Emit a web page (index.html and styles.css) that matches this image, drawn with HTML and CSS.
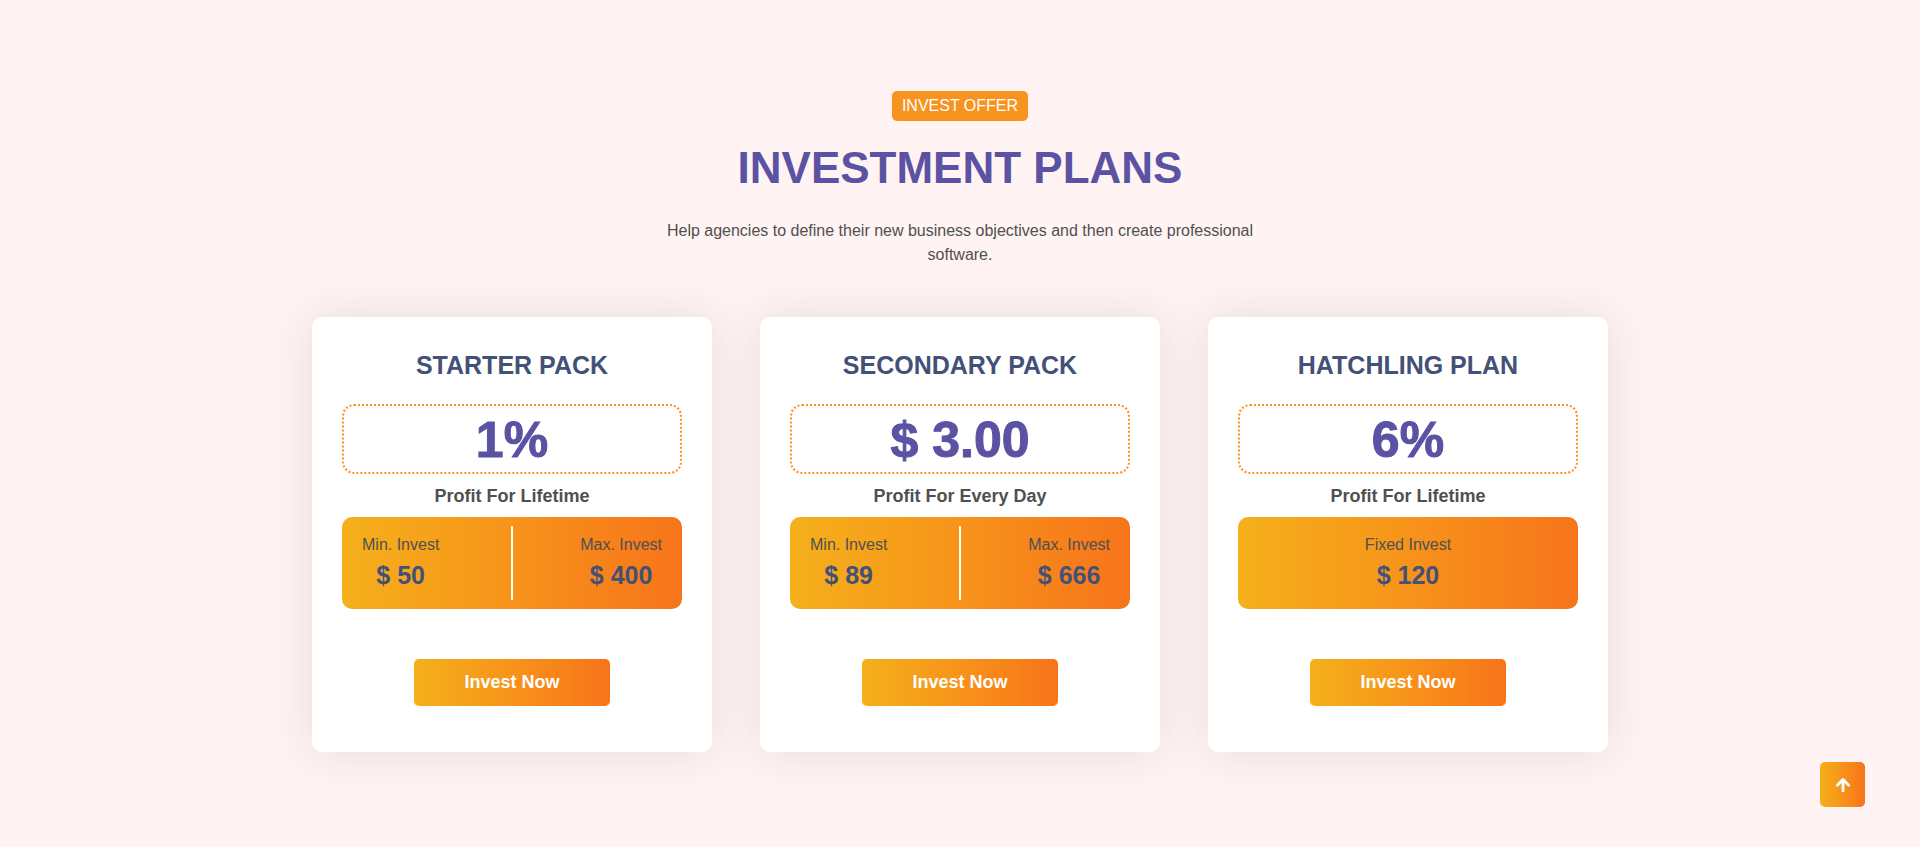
FILE: index.html
```html
<!DOCTYPE html>
<html lang="en">
<head>
<meta charset="utf-8">
<meta name="viewport" content="width=device-width, initial-scale=1">
<title>Investment Plans</title>
<link rel="stylesheet" href="styles.css">
</head>
<body>
<section class="plans">
  <header class="plans-header">
    <span class="badge">INVEST OFFER</span>
    <h2 class="plans-title">INVESTMENT PLANS</h2>
    <p class="plans-text">Help agencies to define their new business objectives and then create professional software.</p>
  </header>
  <div class="plan-grid">
    <article class="plan">
      <h3 class="plan-name">STARTER PACK</h3>
      <div class="rate">1%</div>
      <p class="period">Profit For Lifetime</p>
      <div class="limits">
        <div class="limit"><span class="limit-label">Min. Invest</span><strong class="limit-value">$ 50</strong></div>
        <span class="divider"></span>
        <div class="limit limit-max"><span class="limit-label">Max. Invest</span><strong class="limit-value">$ 400</strong></div>
      </div>
      <button class="invest" type="button">Invest Now</button>
    </article>
    <article class="plan">
      <h3 class="plan-name">SECONDARY PACK</h3>
      <div class="rate">$ 3.00</div>
      <p class="period">Profit For Every Day</p>
      <div class="limits">
        <div class="limit"><span class="limit-label">Min. Invest</span><strong class="limit-value">$ 89</strong></div>
        <span class="divider"></span>
        <div class="limit limit-max"><span class="limit-label">Max. Invest</span><strong class="limit-value">$ 666</strong></div>
      </div>
      <button class="invest" type="button">Invest Now</button>
    </article>
    <article class="plan">
      <h3 class="plan-name">HATCHLING PLAN</h3>
      <div class="rate">6%</div>
      <p class="period">Profit For Lifetime</p>
      <div class="limits limits-fixed">
        <div class="limit"><span class="limit-label">Fixed Invest</span><strong class="limit-value">$ 120</strong></div>
      </div>
      <button class="invest" type="button">Invest Now</button>
    </article>
  </div>
</section>
<a class="to-top" href="#" aria-label="Back to top">
  <svg width="14" height="14" viewBox="0 0 14 14" fill="none" stroke="currentColor" stroke-width="2.8" stroke-linecap="round" stroke-linejoin="round" aria-hidden="true"><path d="M1.4 7.2 7 1.6l5.6 5.6"/><path d="M7 2.5V14" stroke-linecap="butt"/></svg>
</a>
</body>
</html>
```
FILE: styles.css
```css
* { box-sizing: border-box; }
body {
  margin: 0;
  background: #fff4f3;
  color: #505050;
  font: 16px/24px "Liberation Sans", Arial, sans-serif;
}
h2, h3, p { margin: 0; }

.plans {
  max-width: 1320px;
  margin: 0 auto;
  padding: 91px 12px 95px;
}
.plans-header {
  display: flex;
  flex-direction: column;
  align-items: center;
  max-width: 636px;
  margin: 0 auto 50px;
  text-align: center;
}
.badge {
  padding: 3px 10px;
  border-radius: 5px;
  background: #f7931e;
  color: #fff;
}
.plans-title {
  margin: 21px 0 25px;
  color: #5b52a3;
  font-size: 44px;
  line-height: 52px;
}

.plan-grid {
  display: grid;
  grid-template-columns: repeat(auto-fit, minmax(340px, 1fr));
  gap: 48px;
}
.plan {
  display: flex;
  flex-direction: column;
  align-items: center;
  padding: 30px 30px 46px;
  border-radius: 10px;
  background: #fff;
  box-shadow: 0 0 50px rgba(0, 0, 0, 0.1);
  text-align: center;
}
.plan-name {
  margin-bottom: 20px;
  color: #435179;
  font-size: 25px;
  line-height: 37px;
}
.rate {
  width: 100%;
  padding: 4px 0 2px;
  border: 2px dotted #f7931e;
  border-radius: 12px;
  color: #5b52a3;
  font-size: 50px;
  font-weight: 900;
  line-height: 60px;
  -webkit-text-stroke: 1px #5b52a3;
}
.period {
  margin: 10px 0 9px;
  font-size: 18px;
  font-weight: bold;
}
.limits {
  display: grid;
  grid-template-columns: 1fr 2px 1fr;
  width: 100%;
  padding: 9px 20px;
  border-radius: 10px;
  background: linear-gradient(90deg, #f5b01b, #f7931a 50%, #f7741b);
}
.limits-fixed {
  grid-template-columns: 1fr;
  justify-items: center;
}
.limit {
  display: flex;
  flex-direction: column;
  align-items: center;
  width: max-content;
  padding: 7px 0;
}
.limit-max { justify-self: end; }
.limit-value {
  color: #435179;
  font-size: 25px;
  line-height: 36px;
}
.divider { background: #fff; }
.invest {
  margin-top: 50px;
  padding: 10px 50px;
  border: 0;
  border-radius: 5px;
  background: linear-gradient(90deg, #f5b01b, #f7931a 50%, #f7741b);
  color: #fff;
  font: bold 18px/27px "Liberation Sans", Arial, sans-serif;
  cursor: pointer;
}
.to-top {
  position: fixed;
  right: 55px;
  bottom: 40px;
  display: grid;
  place-items: center;
  width: 45px;
  height: 45px;
  border-radius: 5px;
  background: linear-gradient(90deg, #f5b01b, #f7931a 50%, #f7741b);
  color: #fff;
}
```
